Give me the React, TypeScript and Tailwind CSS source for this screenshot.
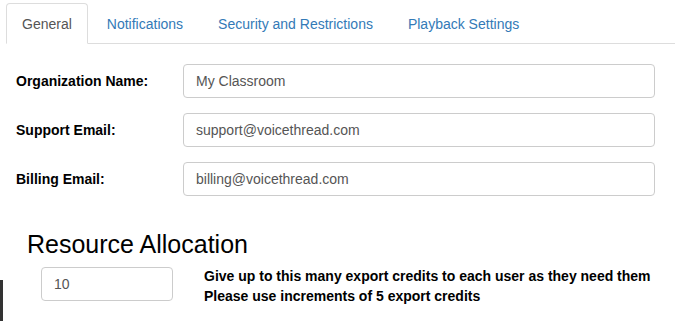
import { useState } from "react";

const tabs = ["General", "Notifications", "Security and Restrictions", "Playback Settings"];

const fields = [
  { label: "Organization Name:", value: "My Classroom" },
  { label: "Support Email:", value: "support@voicethread.com" },
  { label: "Billing Email:", value: "billing@voicethread.com" },
];

export default function App() {
  const [active, setActive] = useState(0);
  const [credits, setCredits] = useState("10");

  return (
    <div className="relative h-[321px] w-[675px] overflow-hidden bg-white font-['Liberation_Sans',Arial,sans-serif] text-[14px] text-[#333]">
      <ul className="ml-[6px] flex border-b border-[#ddd] pt-[3px]">
        {tabs.map((t, i) => (
          <li key={t} className="-mb-px mr-[3px]">
            <button
              onClick={() => setActive(i)}
              className={
                i === active
                  ? "h-[41px] rounded-t-[4px] border border-[#ddd] border-b-white bg-white px-[15px] leading-[20px] text-[#555]"
                  : "h-[41px] rounded-t-[4px] border border-transparent px-[15px] leading-[20px] text-[#337ab7]"
              }
            >
              {t}
            </button>
          </li>
        ))}
      </ul>

      <div className="flex flex-col gap-[15px] pt-[20px] pl-[16px] pr-[20px]">
        {fields.map((f) => (
          <div key={f.label} className="flex items-center">
            <label className="w-[167px] text-[14px] font-bold text-black">{f.label}</label>
            <input
              defaultValue={f.value}
              className="h-[34px] flex-1 rounded-[4px] border border-[#ccc] px-[12px] text-[14px] text-[#555] outline-none"
            />
          </div>
        ))}
      </div>

      <h2 className="mt-[34px] ml-[27px] text-[25px] leading-[28px] text-black">Resource Allocation</h2>

      <div className="mt-[3px] ml-[41px] flex items-center">
        <input
          value={credits}
          onChange={(e) => setCredits(e.target.value)}
          className="h-[34px] w-[132px] rounded-[4px] border border-[#ccc] px-[12px] text-[14px] text-[#555] outline-none"
        />
        <div className="mt-[5px] ml-[31px] text-[14px] font-bold leading-[20px] text-black">
          <p>Give up to this many export credits to each user as they need them</p>
          <p>Please use increments of 5 export credits</p>
        </div>
      </div>

      <div className="absolute bottom-0 left-0 h-[41px] w-[3px] bg-[#333]" />
    </div>
  );
}
